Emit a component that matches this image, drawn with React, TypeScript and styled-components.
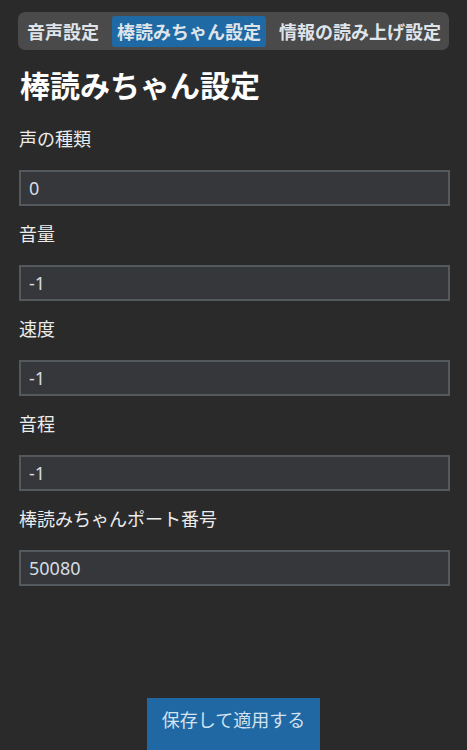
import React, { useState } from "react";
import styled, { createGlobalStyle } from "styled-components";

const GlobalStyle = createGlobalStyle`
  html, body {
    margin: 0;
    padding: 0;
    background: #2a2a2a;
  }
  body {
    font-family: "Noto Sans", "Noto Sans CJK JP", sans-serif;
    color: #e8e8e8;
  }
`;

const Page = styled.div`
  padding: 12px 18px 0 18px;
  box-sizing: border-box;
  width: 467px;
  height: 750px;
  overflow: hidden;
`;

const TabBar = styled.div`
  display: flex;
  align-items: center;
  gap: 8px;
  height: 38px;
  padding: 0 4px;
  box-sizing: border-box;
  background: #4a4a4a;
  border-radius: 7px;
`;

const Tab = styled.button<{ active: boolean }>`
  border: none;
  margin: 0;
  height: 31px;
  padding: 0 5px;
  font-family: "Noto Sans CJK JP", sans-serif;
  font-size: 18px;
  font-weight: 700;
  color: #dfe4ea;
  background: ${(p) => (p.active ? "#1f6aa5" : "transparent")};
  border-radius: 3px;
  cursor: pointer;
  white-space: nowrap;
`;

const Heading = styled.h1`
  margin: 16px 0 23px 2px;
  font-family: "Noto Sans CJK JP", sans-serif;
  font-size: 30px;
  line-height: 36px;
  font-weight: 700;
  color: #ffffff;
`;

const Field = styled.div`
  display: flex;
  flex-direction: column;
  gap: 18px;
  margin-bottom: 14px;
`;

const Label = styled.label`
  font-family: "Noto Sans CJK JP", sans-serif;
  font-size: 18px;
  line-height: 27px;
  color: #ececec;
  padding-left: 1px;
`;

const Input = styled.input`
  box-sizing: border-box;
  width: 431px;
  height: 36px;
  margin-left: 1px;
  padding: 0 8px;
  background: #35373a;
  border: 2px solid #53595c;
  color: #d6dde4;
  font-family: "Noto Sans", "Noto Sans CJK JP", sans-serif;
  font-size: 18px;
  outline: none;
`;

const Footer = styled.div`
  display: flex;
  justify-content: center;
  padding-top: 98px;
`;

const SaveButton = styled.button`
  border: none;
  margin: 0;
  padding: 8px 15px 22px;
  background: #2068a3;
  color: #d3e2f0;
  font-family: "Noto Sans CJK JP", sans-serif;
  font-size: 18px;
  line-height: 27px;
  cursor: pointer;
`;

const tabs = ["音声設定", "棒読みちゃん設定", "情報の読み上げ設定"];

const fields = [
  { label: "声の種類", value: "0" },
  { label: "音量", value: "-1" },
  { label: "速度", value: "-1" },
  { label: "音程", value: "-1" },
  { label: "棒読みちゃんポート番号", value: "50080" },
];

export default function App() {
  const [active, setActive] = useState(1);
  return (
    <>
      <GlobalStyle />
      <Page>
        <TabBar>
          {tabs.map((t, i) => (
            <Tab key={t} active={i === active} onClick={() => setActive(i)}>
              {t}
            </Tab>
          ))}
        </TabBar>
        <Heading>棒読みちゃん設定</Heading>
        {fields.map((f) => (
          <Field key={f.label}>
            <Label>{f.label}</Label>
            <Input defaultValue={f.value} />
          </Field>
        ))}
        <Footer>
          <SaveButton>保存して適用する</SaveButton>
        </Footer>
      </Page>
    </>
  );
}
